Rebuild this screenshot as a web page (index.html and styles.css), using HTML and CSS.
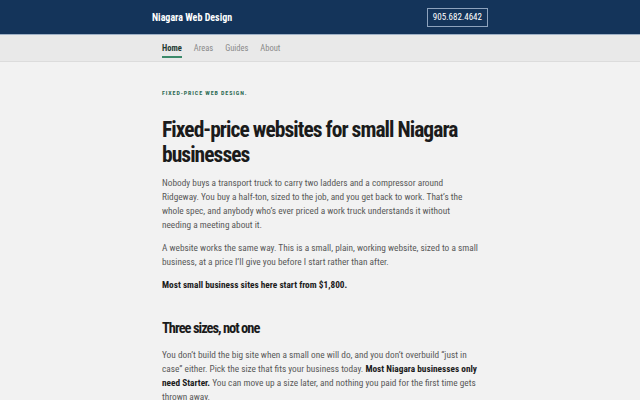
FILE: index.html
```html
<!DOCTYPE html>
<html lang="en">
<head>
<meta charset="utf-8">
<title>Niagara Web Design</title>
<link rel="stylesheet" href="styles.css">
</head>
<body>
<header class="topbar">
  <div class="topbar-inner">
    <a class="brand" href="#">Niagara Web Design</a>
    <a class="phone" href="#">905.682.4642</a>
  </div>
</header>
<nav class="subnav">
  <div class="subnav-inner">
    <a class="nav-link active" href="#">Home</a>
    <a class="nav-link" href="#">Areas</a>
    <a class="nav-link" href="#">Guides</a>
    <a class="nav-link" href="#">About</a>
  </div>
</nav>
<main class="content">
  <p class="eyebrow">FIXED-PRICE WEB DESIGN.</p>
  <h1 class="title">Fixed-price websites for small Niagara businesses</h1>
  <p class="text">Nobody buys a transport truck to carry two ladders and a compressor around Ridgeway. You buy a half-ton, sized to the job, and you get back to work. That’s the whole spec, and anybody who’s ever priced a work truck understands it without needing a meeting about it.</p>
  <p class="text">A website works the same way. This is a small, plain, working website, sized to a small business, at a price I’ll give you before I start rather than after.</p>
  <p class="text strong">Most small business sites here start from $1,800.</p>
  <h2 class="subtitle">Three sizes, not one</h2>
  <p class="text after-sub">You don’t build the big site when a small one will do, and you don’t overbuild “just in case” either. Pick the size that fits your business today. <strong>Most Niagara businesses only need Starter.</strong> You can move up a size later, and nothing you paid for the first time gets thrown away.</p>
</main>
</body>
</html>
```
FILE: styles.css
```css
* { box-sizing: border-box; }
html, body { margin: 0; padding: 0; }
body {
  background: #f2f2f2;
  font-family: "Roboto Condensed", Roboto, "Noto Sans", sans-serif;
  color: #555;
}
a { text-decoration: none; color: inherit; }

.topbar {
  background: #14345a;
  height: 35px;
  border-bottom: 1px solid #9fb1c6;
}
.topbar-inner {
  width: 336px;
  margin: 0 0 0 152px;
  height: 100%;
  display: flex;
  align-items: center;
  justify-content: space-between;
}
.brand {
  font-family: "Roboto Condensed", "DejaVu Sans Condensed", sans-serif;
  font-weight: 700;
  font-size: 10px;
  color: #fff;
}
.phone {
  border: 1px solid #8ea3bd;
  color: #fff;
  font-size: 9px;
  height: 19px;
  padding: 0 5px;
  display: flex;
  align-items: center;
}

.subnav {
  background: #e9e9e9;
  border-bottom: 1px solid #dcdcdc;
  height: 27px;
}
.subnav-inner {
  margin-left: 162px;
  height: 100%;
  display: flex;
  align-items: center;
  gap: 12px;
}
.nav-link {
  font-size: 8.5px;
  color: #8a8a8a;
  padding-top: 3px;
  padding-bottom: 3px;
  border-bottom: 2px solid transparent;
  margin-top: 2px;
}
.nav-link.active {
  color: #1f3b32;
  font-weight: 700;
  border-bottom-color: #3c8a6a;
}

.content {
  margin-left: 162px;
  width: 318px;
  padding-top: 27px;
}
.eyebrow {
  margin: 0;
  font-size: 6px;
  line-height: 8px;
  font-weight: 700;
  letter-spacing: 0.9px;
  color: #2e6b55;
}
.title {
  margin: 20px 0 0;
  font-family: "Roboto Condensed", "DejaVu Sans Condensed", sans-serif;
  font-weight: 700;
  font-size: 21.5px;
  line-height: 25px;
  letter-spacing: -0.95px;
  color: #1b1b1b;
}
.text {
  margin: 9px 0 0;
  font-size: 9.3px;
  line-height: 14px;
  color: #585858;
}
.text strong, .strong { color: #1b1b1b; font-weight: 700; }
.subtitle {
  margin: 28px 0 0;
  font-family: "Roboto Condensed", "DejaVu Sans Condensed", sans-serif;
  font-weight: 700;
  font-size: 14.5px;
  line-height: 18px;
  letter-spacing: -1px;
  color: #1b1b1b;
}
.after-sub { margin-top: 10px; }
```
